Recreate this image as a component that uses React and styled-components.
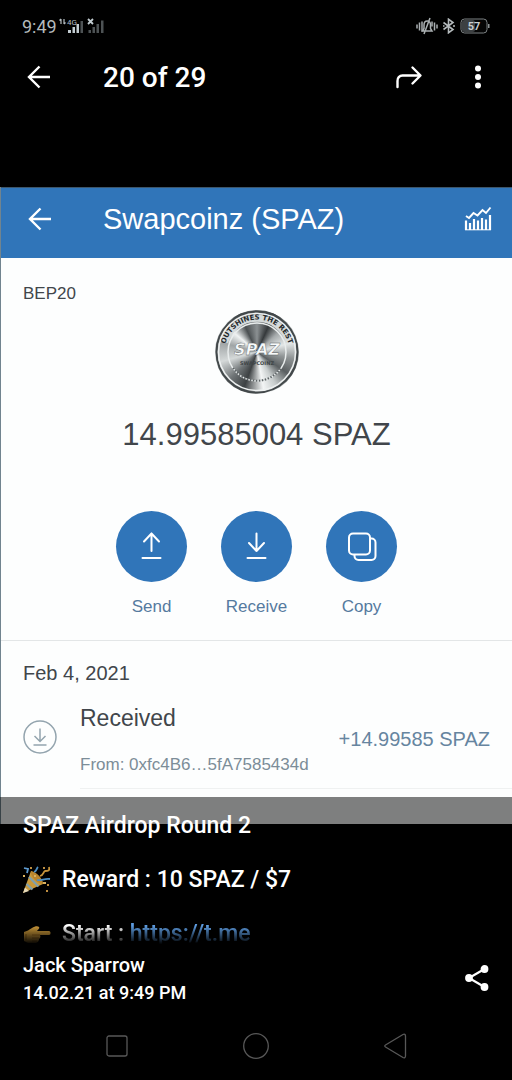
import styled, { createGlobalStyle } from 'styled-components';

const StatusBar = () => (
  <StatusRow>
    <Clock>9:49</Clock>
    <SignalIcon viewBox="0 0 48 20">
      <path d="M3 3v5M1.500 4.500 3 3M6 3v5M6 8l1.500-1.500" stroke="#b4bcc0" strokeWidth="1.200" fill="none" />
      <text x="9" y="9" fill="#b4bcc0" fontSize="8" fontFamily="Roboto, sans-serif">
        4G
      </text>
      <path d="M10 14h3v3h-3zM14.500 11h2.500v6h-2.500zM18.500 8h2.500v9h-2.500z" fill="#c3cdd2" />
      <path d="M22.500 5h2.500v12h-2.500z" fill="#4d5254" />
      <path d="M30 3l5 5M35 3l-5 5" stroke="#c3cdd2" strokeWidth="1.800" />
      <path d="M30.500 14h2.500v3h-2.500zM34.500 11h2.500v6h-2.500zM38.500 8h2.500v9h-2.500zM43 4.500h2.500V17H43z" fill="#4d5254" />
    </SignalIcon>
    <StatusIcons>
      <svg width="22" height="18" viewBox="0 0 22 18" fill="none" stroke="#aab0b2" strokeWidth="1.500">
        <path d="M1 7.500v4M3.500 5.500v8M6 4.500v10M21 7.500v4M18.500 5.500v8M16 4.500v5" />
        <path d="M6.500 14h9.500l-1.500-2.500V8c0-2.500-1.300-4-3.300-4S8 5.500 8 8v3.500zM14 1 8 17" />
      </svg>
      <svg width="14" height="16" viewBox="0 0 14 16" fill="none" stroke="#b4babc" strokeWidth="1.600">
        <path d="M1.500 4.500 11 11.500 6.500 14.800V1.200L11 4.500l-9.500 7" />
        <path d="M11 8h2M1 8h1.500" />
      </svg>
      <svg width="30" height="16" viewBox="0 0 30 16">
        <rect x="1" y="1" width="26" height="14" rx="3.500" fill="#050505" stroke="#7d8284" />
        <rect x="2" y="2" width="13" height="12" rx="2.500" fill="#3c4042" />
        <path d="M28 6h1.500v4H28z" fill="#8d9294" />
        <text x="14" y="12" textAnchor="middle" fill="#c8ced0" fontSize="11" fontWeight="700" fontFamily="Roboto, sans-serif">
          57
        </text>
      </svg>
    </StatusIcons>
  </StatusRow>
);

const BackArrow = () => (
  <svg width="24" height="24" viewBox="0 0 24 24" fill="none" stroke="#fff" strokeWidth="2.400">
    <path d="M23 12H2M12.500 1.500 2 12l10.500 10.500" />
  </svg>
);

const TransferGlyph = ({ up }) => (
  <svg width="24" height="30" viewBox="0 0 24 30" fill="none" stroke="currentColor" strokeWidth="2" strokeLinecap="round" strokeLinejoin="round">
    <path d={up ? 'M11.500 19V1.500M4 9.500l7.500-8 7.500 8' : 'M11.500 1.500V19M4 11l7.500 8 7.500-8'} />
    <path d="M2.500 26h18" />
  </svg>
);

const CopyGlyph = () => (
  <svg width="30" height="30" viewBox="0 0 30 30" fill="none" stroke="#fff" strokeWidth="2">
    <rect x="2" y="1.500" width="21" height="21" rx="4" />
    <path d="M23 6.500h1.500a4 4 0 0 1 4 4V24a4 4 0 0 1-4 4H11.500a4 4 0 0 1-4-4v-1.500" />
  </svg>
);

const ChartGlyph = () => (
  <svg width="28" height="26" viewBox="0 0 28 26" fill="none" stroke="#fff">
    <path d="M2 10 5 12 9.500 7l4 2.500L18.500 4l3.500 3 4.500-5.500" strokeWidth="1.900" />
    <path d="M2 14.500v9.500M6 17v7M10 13v11M14 14.500v9.500M18 12v12M22 13.500v10.500M26 9v15" strokeWidth="2.200" />
    <path d="M1 23.800h26" strokeWidth="1" />
  </svg>
);

const Coin = () => (
  <CoinFace>
    <svg width="84" height="84" viewBox="0 0 84 84" role="img" aria-label="SPAZ coin">
      <defs>
        <path id="coinTop" d="M9.500 42a32.500 32.500 0 0 1 65 0" />
      </defs>
      <circle cx="42" cy="42" r="40.500" fill="none" stroke="#42484a" strokeWidth="2" />
      <circle cx="42" cy="42" r="38.500" fill="none" stroke="#eef1f1" strokeWidth="1.500" />
      <path d="M9.600 32a34 34 0 0 1 64.800 0" fill="none" stroke="#d5dada" strokeWidth="7" />
      <circle cx="42" cy="42" r="29" fill="none" stroke="#e9eded" strokeWidth="1.500" />
      <text fill="#24292b" fontSize="7" fontWeight="700" fontFamily="DejaVu Sans, sans-serif">
        <textPath href="#coinTop" startOffset="50%" textAnchor="middle">
          OUTSHINES THE REST
        </textPath>
      </text>
      <text x="42" y="45" textAnchor="middle" fill="#f7fafa" stroke="#54595b" strokeWidth="0.400" fontSize="16" fontWeight="700" fontStyle="italic" fontFamily="DejaVu Sans, sans-serif">
        SPAZ
      </text>
      <text x="42" y="55" textAnchor="middle" fill="#3f4547" fontSize="5" fontWeight="700" fontFamily="DejaVu Sans, sans-serif">
        SWAPCOINZ
      </text>
      <path d="M18 58a29 29 0 0 0 48 0" fill="none" stroke="#5d6365" strokeWidth="2" strokeDasharray="1.500 1.500" />
    </svg>
  </CoinFace>
);

const PartyPopper = () => (
  <svg width="28" height="28" viewBox="0 0 28 28" role="img" aria-label="Party popper">
    <path d="M0 27 8 5c5 2 11 8 12 13z" fill="#c99a3c" />
    <path d="M8 5c6 1 12 8 12 13-5 0-13-7-12-13z" fill="#b9852f" />
    <path d="m6 11 9.500 9.500M3.500 18l6 5.500" stroke="#7fa0ae" strokeWidth="2.200" />
    <path d="M0 27l2-5.500 4 3.500z" fill="#e4d8b8" />
    <path d="M14 14c4 1 8-2 13-1M11 6c3-1 2-3 4-5" stroke="#4d8fc4" strokeWidth="1.800" fill="none" />
    <path d="M17 10c4-1 3-4 5-5 3 0 5 0 4-4" stroke="#c8953c" strokeWidth="1.800" fill="none" />
    <path d="M1 2l4 1-1 4" stroke="#5e9bd0" strokeWidth="1.800" fill="none" />
    <path d="M7 1h2v2H7zM20 1h2v2h-2zM24 18h2v2h-2zM23 24h2v2h-2z" fill="#bd8d40" />
    <path d="M11 9h2v2h-2zM20 16h3v2h-3zM0 9h2v2H0z" fill="#d9b15e" />
  </svg>
);

const PointingHand = () => (
  <svg width="28" height="28" viewBox="0 0 28 28" role="img" aria-label="Pointing right">
    <path d="M1 12c3-1 5-2 8-4 3-2 6-2 7-1s-1 3-2 4h12c2 0 2 4 0 4h-9c1 2 0 3-1 4 0 2-1 3-3 4H5l-4-2z" fill="#cc993a" />
    <path d="M9 15h8M9 18h7M9 21h5M3 14v6" stroke="#99691c" strokeWidth="1.200" fill="none" />
  </svg>
);

const App = () => {
  return (
    <Screen>
      <GlobalStyle />
      <StatusBar />

      <Toolbar>
        <IconButton aria-label="Back">
          <BackArrow />
        </IconButton>
        <Title>20 of 29</Title>
        <IconButton aria-label="Forward">
          <svg width="28" height="24" viewBox="0 0 28 24" fill="none" stroke="#fff" strokeWidth="2.400" strokeLinecap="round" strokeLinejoin="round">
            <path d="M2.500 22v-6a5 5 0 0 1 5-5.500H25M17.500 2.500l8 8-8 8" />
          </svg>
        </IconButton>
        <MenuButton aria-label="More options">
          <svg width="8" height="24" viewBox="0 0 8 24" fill="#fff">
            <circle cx="4" cy="3.500" r="3" />
            <circle cx="4" cy="12" r="3" />
            <circle cx="4" cy="20.500" r="3" />
          </svg>
        </MenuButton>
      </Toolbar>

      <Photo>
        <WalletHeader>
          <IconButton aria-label="Back to wallet">
            <BackArrow />
          </IconButton>
          <WalletTitle>Swapcoinz (SPAZ)</WalletTitle>
          <IconButton aria-label="Price chart">
            <ChartGlyph />
          </IconButton>
        </WalletHeader>

        <Summary>
          <Network>BEP20</Network>
          <Coin />
          <Balance>14.99585004 SPAZ</Balance>
          <Actions>
            <Action>
              <Disc>
                <TransferGlyph up />
              </Disc>
              Send
            </Action>
            <Action>
              <Disc>
                <TransferGlyph />
              </Disc>
              Receive
            </Action>
            <Action>
              <Disc>
                <CopyGlyph />
              </Disc>
              Copy
            </Action>
          </Actions>
        </Summary>

        <History>
          <DateLabel>Feb 4, 2021</DateLabel>
          <Transaction>
            <svg width="34" height="34" viewBox="0 0 34 34" fill="none" stroke="#93a4ae" strokeWidth="1.500">
              <circle cx="17" cy="17" r="16" />
              <path d="M17 8.500v13M11.500 16l5.500 5.500 5.500-5.500M10.500 25h13" />
            </svg>
            <Details>
              <div>
                <Kind>Received</Kind>
                <From>From: 0xfc4B6…5fA7585434d</From>
              </div>
              <Amount>+14.99585 SPAZ</Amount>
            </Details>
          </Transaction>
        </History>
      </Photo>

      <Caption>
        <CaptionLine>SPAZ Airdrop Round 2</CaptionLine>
        <CaptionLine>
          <PartyPopper />
          Reward : 10 SPAZ / $7
        </CaptionLine>
        <FadingLine>
          <PointingHand />
          <span>
            Start : <a href="https://t.me">https://t.me</a>
          </span>
        </FadingLine>
      </Caption>

      <Footer>
        <div>
          <Sender>Jack Sparrow</Sender>
          <SentAt>14.02.21 at 9:49 PM</SentAt>
        </div>
        <IconButton aria-label="Share">
          <svg width="26" height="28" viewBox="0 0 26 28" fill="#fff" stroke="#fff" strokeWidth="2.200">
            <path d="M20.500 4 5 13l15.500 9" fill="none" />
            <circle cx="20.500" cy="4" r="2.800" />
            <circle cx="5" cy="13" r="2.800" />
            <circle cx="20.500" cy="22" r="2.800" />
          </svg>
        </IconButton>
      </Footer>

      <NavBar>
        <IconButton aria-label="Recent apps">
          <svg width="24" height="24" viewBox="0 0 24 24" fill="none" stroke="#585858" strokeWidth="1.300">
            <rect x="2" y="2" width="20" height="20" rx="2" />
          </svg>
        </IconButton>
        <IconButton aria-label="Home">
          <svg width="28" height="28" viewBox="0 0 28 28" fill="none" stroke="#585858" strokeWidth="1.300">
            <circle cx="14" cy="14" r="12.300" />
          </svg>
        </IconButton>
        <IconButton aria-label="Navigate back">
          <svg width="24" height="26" viewBox="0 0 24 26" fill="none" stroke="#585858" strokeWidth="1.300" strokeLinejoin="round">
            <path d="M2.500 12 20 1.500c1.300-.7 2.500-.2 2.500 1.500v20c0 1.700-1.200 2.200-2.500 1.500L2.500 14c-1-.6-1-1.400 0-2z" />
          </svg>
        </IconButton>
      </NavBar>
    </Screen>
  );
};

const GlobalStyle = createGlobalStyle`
  * {
    box-sizing: border-box;
  }

  body {
    margin: 0;
    background: #000;
  }

  h1, h2, p {
    margin: 0;
  }

  svg {
    display: block;
    flex-shrink: 0;
  }
`;

const Screen = styled.div`
  display: flex;
  flex-direction: column;
  min-height: 100vh;
  background: #000;
  color: #fff;
  font-family: Roboto, sans-serif;
`;

const StatusRow = styled.div`
  display: flex;
  align-items: center;
  height: 52px;
  padding: 0 22px;
`;

const Clock = styled.span`
  color: #b4babc;
  font-size: 18px;
`;

const SignalIcon = styled.svg`
  width: 48px;
  height: 20px;
  margin-left: 1px;
`;

const StatusIcons = styled.div`
  display: flex;
  align-items: center;
  gap: 4px;
  margin-left: auto;
`;

const IconButton = styled.button`
  display: flex;
  align-items: center;
  justify-content: center;
  flex-shrink: 0;
  width: 36px;
  height: 36px;
  padding: 0;
  border: 0;
  background: none;
  color: inherit;
`;

const MenuButton = styled(IconButton)`
  margin-left: 33px;
`;

const Toolbar = styled.header`
  display: flex;
  align-items: center;
  height: 50px;
  padding: 0 16px 0 21px;
`;

const Title = styled.h1`
  flex: 1;
  margin-left: 46px;
  font-size: 28px;
  font-weight: 500;
`;

const Photo = styled.main`
  margin-top: 85px;
  padding-bottom: 35px;
  border-left: 1px solid #71848f;
  background: #fdfefe;
  color: #41464b;
  font-family: 'Liberation Sans', Arial, sans-serif;
`;

const WalletHeader = styled.div`
  display: flex;
  align-items: center;
  height: 71px;
  padding: 0 16px 8px 21px;
  border-top: 1px solid #3d566b;
  background: #3075b9;
  color: #fff;
`;

const WalletTitle = styled.h2`
  flex: 1;
  margin-left: 45px;
  font-size: 29px;
  font-weight: 400;
`;

const Summary = styled.section`
  display: flex;
  flex-direction: column;
  align-items: center;
  padding: 26px 0 23px;
  border-bottom: 1px solid #e3e6e7;
`;

const Network = styled.p`
  align-self: flex-start;
  padding-left: 22px;
  font-size: 17px;
  line-height: 20px;
`;

const CoinFace = styled.div`
  margin-top: 6px;
  border-radius: 50%;
  background: conic-gradient(
    #8b9092,
    #35393b 24deg,
    #a5aaab 48deg,
    #e3e7e7 75deg,
    #8f9495 100deg,
    #5a5f61 125deg,
    #c7cccc 150deg,
    #f3f5f5 170deg,
    #3d4143 200deg,
    #6f7476 225deg,
    #d5d9d9 255deg,
    #a0a5a6 285deg,
    #f0f3f3 310deg,
    #4b5052 335deg,
    #8b9092
  );
`;

const Balance = styled.p`
  margin-top: 23px;
  font-size: 31px;
  line-height: 36px;
`;

const Actions = styled.div`
  display: flex;
  gap: 34px;
  margin-top: 58px;
`;

const Action = styled.button`
  display: flex;
  flex-direction: column;
  align-items: center;
  gap: 15px;
  width: 71px;
  padding: 0;
  border: 0;
  background: none;
  color: #557a9f;
  font-family: inherit;
  font-size: 17px;
  line-height: 20px;
`;

const Disc = styled.span`
  display: flex;
  align-items: center;
  justify-content: center;
  width: 71px;
  height: 71px;
  border-radius: 50%;
  background: #3075b9;
  color: #fff;
`;

const History = styled.section`
  padding: 20px 0 0 22px;
`;

const DateLabel = styled.p`
  font-size: 20px;
  line-height: 24px;
`;

const Transaction = styled.div`
  display: flex;
  align-items: center;
  gap: 23px;
`;

const Details = styled.div`
  display: flex;
  flex: 1;
  align-items: center;
  justify-content: space-between;
  padding: 19px 22px 13px 0;
  border-bottom: 1px solid #eff1f1;
`;

const Kind = styled.p`
  font-size: 23px;
  line-height: 28px;
`;

const From = styled.p`
  margin-top: 23px;
  color: #7c8d98;
  font-size: 17px;
  line-height: 20px;
`;

const Amount = styled.p`
  color: #6685a0;
  font-size: 20px;
`;

const Caption = styled.div`
  position: relative;
  display: flex;
  flex-direction: column;
  gap: 27px;
  margin-top: -27px;
  padding: 15px 23px 0;
  background: rgba(0, 0, 0, 0.5);
`;

const CaptionLine = styled.p`
  display: flex;
  align-items: center;
  gap: 11px;
  height: 27px;
  font-size: 23px;
  font-weight: 500;
`;

const FadingLine = styled(CaptionLine)`
  mask-image: linear-gradient(to bottom, #000 20%, transparent 90%);

  a {
    color: #5d9ce0;
    text-decoration: none;
  }
`;

const Footer = styled.footer`
  display: flex;
  align-items: center;
  justify-content: space-between;
  padding: 4px 17px 0 23px;
`;

const Sender = styled.p`
  font-size: 20px;
  font-weight: 500;
  line-height: 28px;
`;

const SentAt = styled(Sender)`
  font-size: 18px;
`;

const NavBar = styled.nav`
  display: flex;
  justify-content: center;
  gap: 103px;
  margin-top: auto;
  padding: 16px 0;
`;

export default App;
